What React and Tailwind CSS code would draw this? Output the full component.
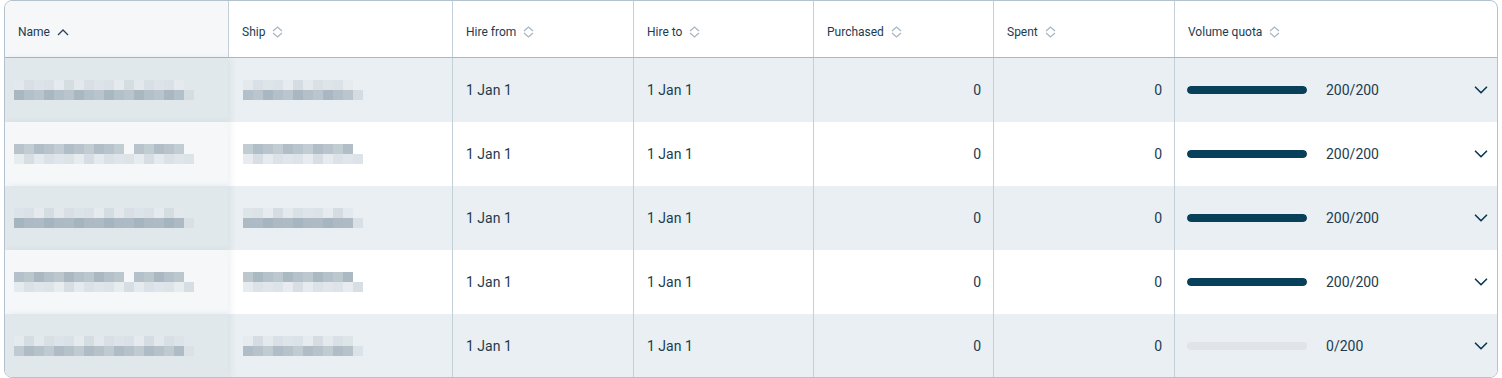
import React from 'react';
import { ChevronDown } from 'lucide-react';

const cols = [
  { key: 'name', label: 'Name', w: 'w-[223px]', sorted: true },
  { key: 'ship', label: 'Ship', w: 'w-[224px]' },
  { key: 'from', label: 'Hire from', w: 'w-[181px]' },
  { key: 'to', label: 'Hire to', w: 'w-[180px]' },
  { key: 'purchased', label: 'Purchased', w: 'w-[180px]' },
  { key: 'spent', label: 'Spent', w: 'w-[181px]' },
  { key: 'quota', label: 'Volume quota', w: 'flex-1' },
];

const rows = [
  { used: 200 },
  { used: 200 },
  { used: 200 },
  { used: 200 },
  { used: 0 },
];

// pixelated placeholders for hidden names
const darkTones = ['#a9b6c0', '#a3b2bd', '#b2bec7', '#9fb0bc', '#aebcc6', '#bcc8cf', '#a8b5bf', '#b5c1c9', '#aab8c2'];
const lightTones = ['#dde4e9', '#d8e0e6', '#e3e9ed', '#d3dce2', '#e6ebef', '#dae2e7'];

const Mosaic = ({ count, seed, darkTop }) => {
  const top = [];
  const bottom = [];
  for (let i = 0; i < count; i++) {
    const a = darkTones[(i * 3 + seed) % darkTones.length];
    const b = lightTones[(i * 5 + seed * 2) % lightTones.length];
    const gap = i === count - 1 || (seed % 2 === 0 && i === 11 && count > 12);
    top.push(<div key={i} className="w-[10px] h-[10px]" style={{ background: gap ? 'transparent' : darkTop ? a : b }} />);
    bottom.push(<div key={i} className="w-[10px] h-[10px]" style={{ background: i === count - 1 ? b : darkTop ? b : a }} />);
  }
  return (
    <div className="flex flex-col opacity-90">
      <div className="flex">{top}</div>
      <div className="flex">{bottom}</div>
    </div>
  );
};

const SortIcon = () => (
  <svg width="11" height="12" viewBox="0 0 11 12" fill="none" stroke="#a6b5c0" strokeWidth="1.2">
    <path d="M1 5 L5.5 1 L10 5" />
    <path d="M1 7 L5.5 11 L10 7" />
  </svg>
);

const SortUp = () => (
  <svg width="12" height="7" viewBox="0 0 12 7" fill="none" stroke="#2a4456" strokeWidth="1.3">
    <path d="M1 6 L6 1 L11 6" />
  </svg>
);

export default function App() {
  return (
    <div className="w-full h-[378px] bg-white px-[4px] font-['Roboto',sans-serif] text-[#1d3b4f]">
      <div className="h-[378px] border border-[#b3c2cc] rounded-[8px] overflow-hidden flex flex-col">
        <div className="flex h-[57px] border-b border-[#a8b7c2] shrink-0">
          {cols.map((c, i) => (
            <div
              key={c.key}
              className={`${c.w} flex items-center gap-[7px] pl-[13px] pt-[6px] text-[12px] ${i > 0 ? 'border-l border-[#c4d0d8]' : 'bg-[#f5f7f9]'}`}
            >
              <span>{c.label}</span>
              {c.sorted ? <SortUp /> : <SortIcon />}
            </div>
          ))}
        </div>
        {rows.map((r, idx) => {
          const shaded = idx % 2 === 0;
          return (
            <div key={idx} className={`flex h-[64px] shrink-0 text-[14px] ${shaded ? 'bg-[#e9eff2]' : 'bg-white'}`}>
              <div className={`w-[223px] flex items-center pl-[9px] shadow-[3px_0_6px_rgba(120,140,155,0.12)] relative ${shaded ? 'bg-[#e1e8ec]' : 'bg-[#f5f7f9]'}`}>
                <Mosaic count={18} seed={idx + 1} darkTop={!shaded} />
              </div>
              <div className="w-[224px] flex items-center pl-[15px]">
                <Mosaic count={12} seed={idx + 4} darkTop={!shaded} />
              </div>
              <div className="w-[181px] flex items-center pl-[13px] border-l border-[#c4d0d8]">1 Jan 1</div>
              <div className="w-[180px] flex items-center pl-[13px] border-l border-[#c4d0d8]">1 Jan 1</div>
              <div className="w-[180px] flex items-center justify-end pr-[12px] border-l border-[#c4d0d8]">0</div>
              <div className="w-[181px] flex items-center justify-end pr-[12px] border-l border-[#c4d0d8]">0</div>
              <div className="flex-1 flex items-center pl-[12px] pr-[5px] border-l border-[#c4d0d8]">
                <div className="w-[120px] h-[8px] rounded-full bg-[#e1e4e7] overflow-hidden">
                  <div className="h-full rounded-full bg-[#08405a]" style={{ width: `${(r.used / 200) * 100}%` }} />
                </div>
                <span className="ml-[19px]">{r.used}/200</span>
                <ChevronDown className="ml-auto text-[#0b3a52]" size={22} strokeWidth={1.8} />
              </div>
            </div>
          );
        })}
      </div>
    </div>
  );
}
